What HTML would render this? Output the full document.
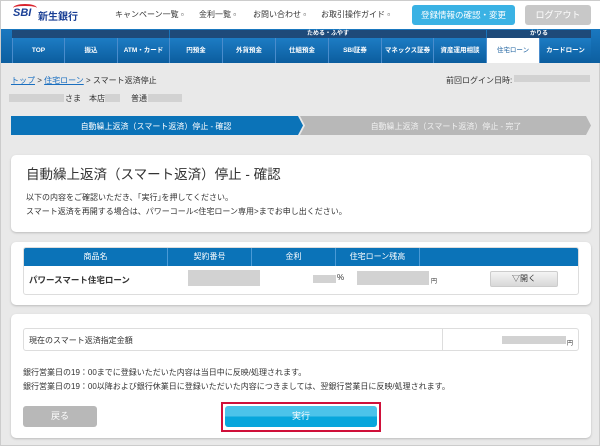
<!DOCTYPE html><html><head><meta charset="utf-8"><style>
*{margin:0;padding:0;box-sizing:border-box}
body{width:600px;height:446px;overflow:hidden;background:#e9e9e9;font-family:"Liberation Sans","Noto Sans CJK JP",sans-serif;color:#333;position:relative;font-size:8px;border:1px solid #ccc}
.a{position:absolute}
.hdr{left:0;top:0;width:600px;height:28px;background:#fff}
.nav{left:0;top:28px;width:600px;height:34px;background:linear-gradient(#1a78c0,#0d5fa0)}
.strip{top:1px;height:8px;background:#1e4a7a;color:#fff;font-size:6px;font-weight:bold;text-align:center;line-height:8px}
.it{top:9px;height:25px;color:#fff;font-size:6.5px;font-weight:bold;text-align:center;line-height:25px;border-left:1px solid #4a8ccc;background:linear-gradient(#1d7cc4,#0b5d9e)}
.panel{background:#fff;border-radius:5px;box-shadow:0 1px 2px #bbb}
.btn{border-radius:3px;text-align:center;color:#fff;font-size:9px;line-height:21px}
.blur{background:#d2d2d2}
</style></head><body>
<div class="a hdr">
 <div class="a" style="left:12px;top:6px;font-size:11px;font-weight:bold;font-style:italic;color:#1a3f95">SBI</div>
 <div class="a" style="left:12px;top:3px;width:24px;height:8px;border-top:2px solid #d9232d;border-radius:50% 50% 0 0"></div>
 <div class="a" style="left:37px;top:7px;font-size:10px;font-weight:bold;color:#1a3f95">新生銀行</div>
 <div class="a" style="left:114px;top:8px;font-size:8px;color:#333">キャンペーン一覧 ▫</div>
 <div class="a" style="left:198px;top:8px;font-size:8px">金利一覧 ▫</div>
 <div class="a" style="left:252px;top:8px;font-size:8px">お問い合わせ ▫</div>
 <div class="a" style="left:320px;top:8px;font-size:8px">お取引操作ガイド ▫</div>
 <div class="a btn" style="left:411px;top:4px;width:103px;height:20px;line-height:20px;background:#3ab2e4;font-size:8.5px">登録情報の確認・変更</div>
 <div class="a btn" style="left:524px;top:4px;width:66px;height:20px;line-height:20px;background:#c8c8c8;font-size:9px">ログアウト</div>
</div>
<div class="a nav">
 <div class="a strip" style="left:11px;width:157px"></div>
 <div class="a strip" style="left:169px;width:316px">ためる・ふやす</div>
 <div class="a strip" style="left:486px;width:104px">かりる</div>
 <div class="a it" style="left:11px;width:52px">TOP</div>
 <div class="a it" style="left:63px;width:53px">振込</div>
 <div class="a it" style="left:116px;width:52px">ATM・カード</div>
 <div class="a it" style="left:168px;width:53px">円預金</div>
 <div class="a it" style="left:221px;width:53px">外貨預金</div>
 <div class="a it" style="left:274px;width:53px">仕組預金</div>
 <div class="a it" style="left:327px;width:53px">SBI証券</div>
 <div class="a it" style="left:380px;width:52px">マネックス証券</div>
 <div class="a it" style="left:432px;width:53px">資産運用相談</div>
 <div class="a it" style="left:485px;width:53px;background:#fff;color:#1a5f9e;font-weight:normal">住宅ローン</div>
 <div class="a it" style="left:538px;width:52px">カードローン</div>
</div>
<div class="a" style="left:10px;top:74px;font-size:8px"><span style="color:#1a6fc0;text-decoration:underline">トップ</span> &gt; <span style="color:#1a6fc0;text-decoration:underline">住宅ローン</span> &gt; スマート返済停止</div>
<div class="a" style="left:445px;top:74px;font-size:8px">前回ログイン日時:</div>
<div class="a blur" style="left:513px;top:74px;width:76px;height:7px"></div>
<div class="a blur" style="left:8px;top:93px;width:55px;height:8px"></div>
<div class="a" style="left:64px;top:92px;font-size:8px">さま　本店</div>
<div class="a blur" style="left:104px;top:93px;width:15px;height:8px"></div>
<div class="a" style="left:130px;top:92px;font-size:8px">普通</div>
<div class="a blur" style="left:147px;top:93px;width:34px;height:8px"></div>
<svg class="a" style="left:10px;top:115px" width="580" height="19"><polygon points="0,0 287,0 292,9.5 287,19 0,19" fill="#0b73b8"/><polygon points="289,0 575,0 580,9.5 575,19 289,19 294,9.5" fill="#b8b8b8"/>
<text x="145" y="13" fill="#fff" font-size="8" text-anchor="middle" font-family="Liberation Sans,Noto Sans CJK JP,sans-serif">自動繰上返済（スマート返済）停止 - 確認</text>
<text x="435" y="13" fill="#f0f0f0" font-size="8" text-anchor="middle" font-family="Liberation Sans,Noto Sans CJK JP,sans-serif">自動繰上返済（スマート返済）停止 - 完了</text></svg>
<div class="a panel" style="left:10px;top:154px;width:580px;height:77px">
 <div class="a" style="left:15px;top:8px;font-size:13.5px;color:#333">自動繰上返済（スマート返済）停止 - 確認</div>
 <div class="a" style="left:15px;top:36px;font-size:8px;line-height:14px">以下の内容をご確認いただき、｢実行｣を押してください。<br>スマート返済を再開する場合は、パワーコール&lt;住宅ローン専用&gt;までお申し出ください。</div>
</div>
<div class="a panel" style="left:10px;top:241px;width:580px;height:63px">
 <div class="a" style="left:12px;top:5px;width:556px;height:48px;border:1px solid #ddd;border-radius:3px;overflow:hidden">
  <div class="a" style="left:0;top:0;width:556px;height:18px;background:#0b73b8;color:#fff;font-size:8px;line-height:18px">
   <span class="a" style="left:0;width:143px;text-align:center">商品名</span>
   <span class="a" style="left:143px;width:84px;text-align:center;border-left:1px solid #4a9ad6">契約番号</span>
   <span class="a" style="left:227px;width:84px;text-align:center;border-left:1px solid #4a9ad6">金利</span>
   <span class="a" style="left:311px;width:84px;text-align:center;border-left:1px solid #4a9ad6">住宅ローン残高</span>
   <span class="a" style="left:395px;width:161px;height:18px;border-left:1px solid #4a9ad6"></span>
  </div>
  <div class="a" style="left:5px;top:26px;font-size:8.5px;font-weight:bold">パワースマート住宅ローン</div>
  <div class="a blur" style="left:164px;top:22px;width:72px;height:16px"></div>
  <div class="a blur" style="left:289px;top:27px;width:23px;height:8px"></div>
  <div class="a" style="left:313px;top:25px;font-size:8px">%</div>
  <div class="a blur" style="left:333px;top:23px;width:72px;height:14px"></div>
  <div class="a" style="left:407px;top:28px;font-size:6px">円</div>
  <div class="a" style="left:466px;top:23px;width:68px;height:16px;border-radius:2px;background:linear-gradient(#f4f4f4,#d8d8d8);border:1px solid #ccc;font-size:8px;text-align:center;line-height:14px">▽開く</div>
 </div>
</div>
<div class="a panel" style="left:10px;top:313px;width:580px;height:124px">
 <div class="a" style="left:12px;top:14px;width:556px;height:23px;border:1px solid #ddd;border-radius:3px">
  <div class="a" style="left:5px;top:6px;font-size:8px">現在のスマート返済指定金額</div>
  <div class="a" style="left:418px;top:0;width:1px;height:21px;background:#ddd"></div>
  <div class="a blur" style="left:478px;top:7px;width:64px;height:8px"></div>
  <div class="a" style="left:543px;top:9px;font-size:6px">円</div>
 </div>
 <div class="a" style="left:12px;top:52px;font-size:8px;line-height:14px">銀行営業日の19：00までに登録いただいた内容は当日中に反映/処理されます。<br>銀行営業日の19：00以降および銀行休業日に登録いただいた内容につきましては、翌銀行営業日に反映/処理されます。</div>
 <div class="a btn" style="left:12px;top:92px;width:74px;height:21px;background:#b8b8b8">戻る</div>
 <div class="a" style="left:210px;top:88px;width:160px;height:30px;border:2px solid #d0103a"></div>
 <div class="a btn" style="left:214px;top:92px;width:152px;height:21px;background:linear-gradient(#4cc3ea 50%,#07a6dc 50%)">実行</div>
</div>
</body></html>
